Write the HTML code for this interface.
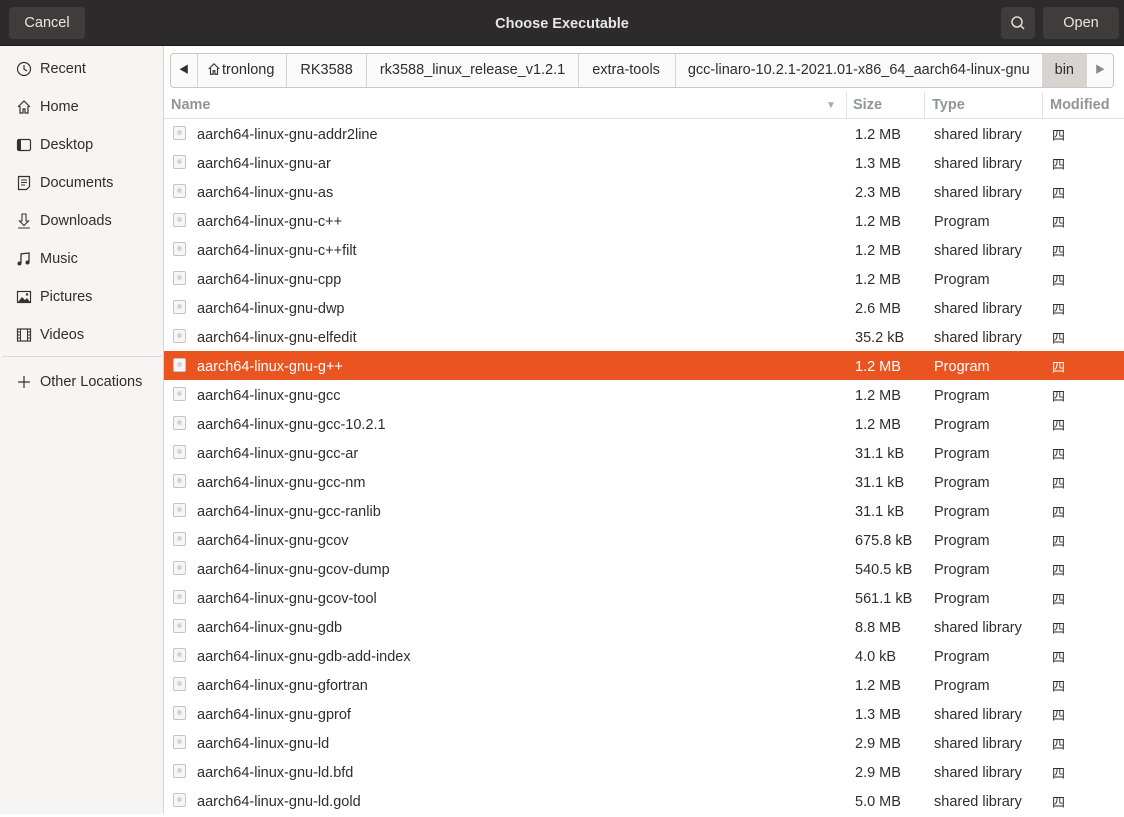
<!DOCTYPE html>
<html><head><meta charset="utf-8"><style>
*{box-sizing:border-box;margin:0;padding:0}
body{width:1124px;height:814px;overflow:hidden;font-family:"Liberation Sans","Noto Sans CJK SC",sans-serif;font-size:14.5px;color:#2e2e2e;background:#fff;position:relative}
.tb{position:absolute;left:0;top:0;width:1124px;height:46px;background:#2c2a2a;border-bottom:1px solid #1a1a1a}
.btn{position:absolute;top:7px;height:32px;background:#3f3c3c;border-radius:4px;color:#e8e8e8;font-size:14.5px;line-height:32px;text-align:center}
.title{position:absolute;top:1px;left:0;width:1124px;text-align:center;line-height:46px;color:#e6e6e6;font-weight:bold;font-size:14.5px}
.side{position:absolute;left:0;top:46px;width:164px;height:768px;background:#f6f5f4;border-right:1px solid #d8d4d0}
.si{position:absolute;left:40px;font-size:14.5px;color:#2e2e2e}
.ico{position:absolute;left:16px}
.pb{position:absolute;left:170px;top:53px;width:944px;height:35px;border:1px solid #cdc7c2;border-radius:4px;background:#fafafa;display:flex}
.pb div{border-right:1px solid #d8d4d0;line-height:33px;padding:0 10px;white-space:nowrap}
.hdr{position:absolute;top:92px;left:164px;width:960px;height:27px;border-bottom:1px solid #e4e2e0;color:#929595;font-weight:bold;font-size:14.5px}
.hdr span{position:absolute;top:5px}
.row{position:absolute;left:164px;width:960px;height:29px;line-height:29px}
.row span{position:absolute;top:2px}
.fi{position:absolute;left:9px;top:7px;width:13px;height:14px;border:1px solid #c4c4c4;border-radius:2px;background:#f6f6f6}
.fi:after{content:"";position:absolute;left:3px;top:3px;width:5px;height:5px;border-radius:50%;background:#d4d4d4}
.sel{background:#e95420;color:#fff}
</style></head><body>
<div class="tb">
<div class="title">Choose Executable</div>
<div class="btn" style="left:9px;width:76px">Cancel</div>
<div class="btn" style="left:1001px;width:34px"><svg width="16" height="16" viewBox="0 0 16 16" style="margin-top:8px"><circle cx="7" cy="7" r="5" fill="none" stroke="#ddd" stroke-width="1.5"/><path d="M10.5 10.5L14 14" stroke="#ddd" stroke-width="1.5"/></svg></div>
<div class="btn" style="left:1043px;width:76px">Open</div>
</div>
<div class="side">
<svg class="ico" style="top:15px" width="16" height="16" viewBox="0 0 16 16"><circle cx="8" cy="8" r="6.5" fill="none" stroke="#333" stroke-width="1.2"/><path d="M8 4v4l3 2" fill="none" stroke="#333" stroke-width="1.2"/></svg><div class="si" style="top:15px">Recent</div>
<svg class="ico" style="top:53px" width="16" height="16" viewBox="0 0 16 16"><path d="M2 8L8 2l6 6M4 7v7h3v-4h2v4h3V7" fill="none" stroke="#333" stroke-width="1.2"/></svg><div class="si" style="top:53px">Home</div>
<svg class="ico" style="top:91px" width="16" height="16" viewBox="0 0 16 16"><rect x="1.5" y="2.5" width="13" height="11" rx="1.5" fill="none" stroke="#333" stroke-width="1.2"/><rect x="2" y="3" width="3" height="10" fill="#333"/></svg><div class="si" style="top:91px">Desktop</div>
<svg class="ico" style="top:129px" width="16" height="16" viewBox="0 0 16 16"><path d="M2.5 1.5h11v10l-3 3h-8z" fill="none" stroke="#333" stroke-width="1.2"/><path d="M5 5h6M5 7.5h6M5 10h4" stroke="#333"/></svg><div class="si" style="top:129px">Documents</div>
<svg class="ico" style="top:167px" width="16" height="16" viewBox="0 0 16 16"><path d="M6 1v7H3.5L8 12.5 12.5 8H10V1zM2 15h12" fill="none" stroke="#333" stroke-width="1.1"/></svg><div class="si" style="top:167px">Downloads</div>
<svg class="ico" style="top:205px" width="16" height="16" viewBox="0 0 16 16"><path d="M5 12V3l8-1v9" fill="none" stroke="#333" stroke-width="1.3"/><circle cx="3.5" cy="12.5" r="2" fill="#333"/><circle cx="11.5" cy="11.5" r="2" fill="#333"/></svg><div class="si" style="top:205px">Music</div>
<svg class="ico" style="top:243px" width="16" height="16" viewBox="0 0 16 16"><rect x="1.5" y="2.5" width="13" height="11" fill="none" stroke="#333" stroke-width="1.2"/><path d="M2 13l4-5 3 3 2-2 3 4z" fill="#333"/><circle cx="11" cy="5.5" r="1.2" fill="#333"/></svg><div class="si" style="top:243px">Pictures</div>
<svg class="ico" style="top:281px" width="16" height="16" viewBox="0 0 16 16"><rect x="1.5" y="2" width="13" height="12" fill="none" stroke="#333" stroke-width="1.2"/><path d="M4.5 2v12M11.5 2v12M1.5 5h3M1.5 8h3M1.5 11h3M11.5 5h3M11.5 8h3M11.5 11h3" stroke="#333"/></svg><div class="si" style="top:281px">Videos</div>
<div style="position:absolute;left:2px;top:310px;width:160px;border-top:1px solid #dcd8d4"></div>
<svg class="ico" style="top:328px" width="16" height="16" viewBox="0 0 16 16"><path d="M8 2v12M2 8h12" stroke="#333" stroke-width="1.2"/></svg><div class="si" style="top:328px">Other Locations</div>
</div>
<div class="pb">
<div style="padding:0 8px;font-size:10px">&#9664;</div>
<div style="padding:0 12px 0 8px"><svg width="16" height="14" viewBox="0 0 16 16" style="vertical-align:-2px"><path d="M2 8L8 2l6 6M4 7v7h3v-4h2v4h3V7" fill="none" stroke="#333" stroke-width="1.3"/></svg>tronlong</div>
<div style="padding:0 13px">RK3588</div>
<div style="padding:0 13px">rk3588_linux_release_v1.2.1</div>
<div style="padding:0 13px 0 13px;width:99px">extra-tools</div>
<div style="padding:0 12px">gcc-linaro-10.2.1-2021.01-x86_64_aarch64-linux-gnu</div>
<div style="background:#d6d3d0;padding:0 12px">bin</div>
<div style="border:none;padding:0 8px;font-size:10px;color:#888">&#9654;</div>
</div>
<div class="hdr"><span style="left:7px">Name</span><span style="left:662px;color:#aaa;font-size:10px;top:8px">&#9660;</span><span style="left:689px">Size</span><span style="left:768px">Type</span><span style="left:886px">Modified</span>
<div style="position:absolute;left:682px;top:0;height:27px;border-left:1px solid #e4e2e0"></div><div style="position:absolute;left:760px;top:0;height:27px;border-left:1px solid #e4e2e0"></div><div style="position:absolute;left:878px;top:0;height:27px;border-left:1px solid #e4e2e0"></div></div>
<div id="rows"></div>
<script>
var d=[["addr2line","1.2 MB",1],["ar","1.3 MB",1],["as","2.3 MB",1],["c++","1.2 MB",0],["c++filt","1.2 MB",1],["cpp","1.2 MB",0],["dwp","2.6 MB",1],["elfedit","35.2 kB",1],["g++","1.2 MB",0],["gcc","1.2 MB",0],["gcc-10.2.1","1.2 MB",0],["gcc-ar","31.1 kB",0],["gcc-nm","31.1 kB",0],["gcc-ranlib","31.1 kB",0],["gcov","675.8 kB",0],["gcov-dump","540.5 kB",0],["gcov-tool","561.1 kB",0],["gdb","8.8 MB",1],["gdb-add-index","4.0 kB",0],["gfortran","1.2 MB",0],["gprof","1.3 MB",1],["ld","2.9 MB",1],["ld.bfd","2.9 MB",1],["ld.gold","5.0 MB",1]];
var h="";d.forEach(function(r,i){h+='<div class="row'+(i==8?' sel':'')+'" style="top:'+(119+i*29)+'px"><div class="fi"></div><span style="left:33px">aarch64-linux-gnu-'+r[0]+'</span><span style="left:691px">'+r[1]+'</span><span style="left:770px">'+(r[2]?'shared library':'Program')+'</span><span style="left:888px;font-size:13px">四</span></div>';});
document.getElementById("rows").innerHTML=h;
</script>
</body></html>
